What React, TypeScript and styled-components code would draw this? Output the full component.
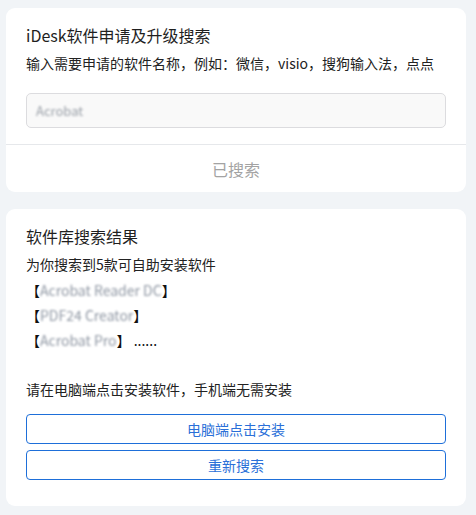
import React from "react";
import styled, { createGlobalStyle } from "styled-components";

const Global = createGlobalStyle`
  html, body { margin: 0; padding: 0; background: #f1f4f7; }
  body { font-family: "Noto Sans CJK SC", "Noto Sans", sans-serif; color: #222; }
  * { box-sizing: border-box; }
`;

const Page = styled.div`
  padding: 8px 10px 10px 6px;
  display: flex;
  flex-direction: column;
  gap: 17px;
`;

const Card = styled.section`
  background: #fff;
  border-radius: 9px;
  display: flex;
  flex-direction: column;
`;

const Body = styled.div<{ $pb?: number }>`
  padding: 16px 20px ${(p) => p.$pb ?? 16}px 20px;
  display: flex;
  flex-direction: column;
`;

const Title = styled.h2`
  margin: 0;
  font-size: 16px;
  line-height: 22px;
  font-weight: 400;
  color: #1f1f1f;
`;

const Text = styled.p<{ $mt?: number }>`
  margin: ${(p) => p.$mt ?? 7}px 0 0 0;
  font-size: 14px;
  line-height: 20px;
  color: #222;
`;

const Input = styled.div`
  margin-top: 20px;
  height: 35px;
  border: 1px solid #dcdcdf;
  border-radius: 5px;
  background: #f9f9f9;
  display: flex;
  align-items: center;
  padding: 0 9px;
  font-size: 13px;
`;

const Blur = styled.span<{ $c?: string }>`
  filter: blur(1.2px);
  color: ${(p) => p.$c ?? "#8f97a3"};
`;

const Footer = styled.div`
  border-top: 1px solid #e6e8eb;
  height: 48px;
  display: flex;
  align-items: center;
  justify-content: center;
  font-size: 16px;
  color: #a3a3a3;
`;

const List = styled.div`
  margin-top: 4px;
  display: flex;
  flex-direction: column;
`;

const Item = styled.div`
  font-size: 14px;
  line-height: 25px;
  color: #111;
`;

const Buttons = styled.div`
  margin-top: 15px;
  display: flex;
  flex-direction: column;
  gap: 6px;
`;

const Button = styled.button`
  height: 30px;
  border: 1px solid #1e6fd9;
  border-radius: 4px;
  background: #fff;
  color: #2a6fd8;
  font-family: "Noto Sans CJK SC", "Noto Sans", sans-serif;
  font-size: 14px;
  padding: 0;
  cursor: pointer;
`;

export default function App() {
  return (
    <>
      <Global />
      <Page>
        <Card>
          <Body>
            <Title>iDesk软件申请及升级搜索</Title>
            <Text>输入需要申请的软件名称，例如：微信，visio，搜狗输入法，点点</Text>
            <Input>
              <Blur $c="#9aa0a8">Acrobat</Blur>
            </Input>
          </Body>
          <Footer>已搜索</Footer>
        </Card>
        <Card>
          <Body $pb={26}>
            <Title>软件库搜索结果</Title>
            <Text>为你搜索到5款可自助安装软件</Text>
            <List>
              <Item>
                【<Blur>Acrobat Reader DC</Blur>】
              </Item>
              <Item>
                【<Blur>PDF24 Creator</Blur>】
              </Item>
              <Item>
                【<Blur>Acrobat Pro</Blur>】 ......
              </Item>
            </List>
            <Text $mt={26}>请在电脑端点击安装软件，手机端无需安装</Text>
            <Buttons>
              <Button>电脑端点击安装</Button>
              <Button>重新搜索</Button>
            </Buttons>
          </Body>
        </Card>
      </Page>
    </>
  );
}
